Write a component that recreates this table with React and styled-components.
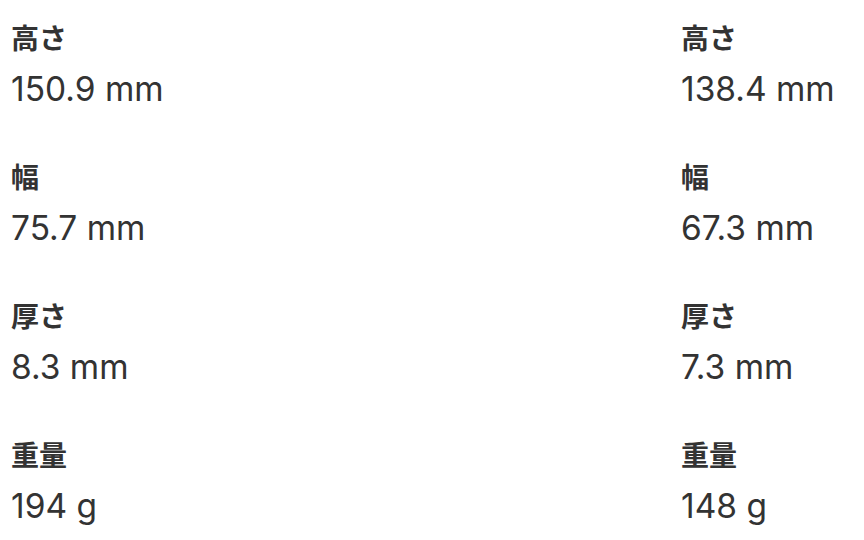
import React from 'react'
import styled, { createGlobalStyle } from 'styled-components'

const specs = [
    [
        { label: '高さ', value: '150.9 mm' },
        { label: '幅', value: '75.7 mm' },
        { label: '厚さ', value: '8.3 mm' },
        { label: '重量', value: '194 g' },
    ],
    [
        { label: '高さ', value: '138.4 mm' },
        { label: '幅', value: '67.3 mm' },
        { label: '厚さ', value: '7.3 mm' },
        { label: '重量', value: '148 g' },
    ],
]

export default function App () {
    return (
        <Page>
            <GlobalStyle />
            {specs.map((column, i) => (
                <Column key={i}>
                    {column.map(item => (
                        <Spec key={item.label}>
                            <Label>{item.label}</Label>
                            <Value>{item.value}</Value>
                        </Spec>
                    ))}
                </Column>
            ))}
        </Page>
    )
}

const GlobalStyle = createGlobalStyle`
    body {
        margin: 0;
        background: #ffffff;
        font-family: Inter, "Noto Sans CJK JP", sans-serif;
        color: #333333;
    }
`

const Page = styled.div`
    display: grid;
    grid-template-columns: 670px 1fr;
    padding: 17px 0 0 11px;
`

const Column = styled.div`
    display: flex;
    flex-direction: column;
    gap: 45px;
`

const Spec = styled.div`
    display: flex;
    flex-direction: column;
    gap: 10px;
`

const Label = styled.div`
    font-family: "Noto Sans CJK JP", sans-serif;
    font-size: 28px;
    font-weight: 700;
    line-height: 40px;
    color: #333333;
`

const Value = styled.div`
    font-family: Inter, sans-serif;
    font-size: 33.5px;
    line-height: 44px;
    color: #333333;
`
